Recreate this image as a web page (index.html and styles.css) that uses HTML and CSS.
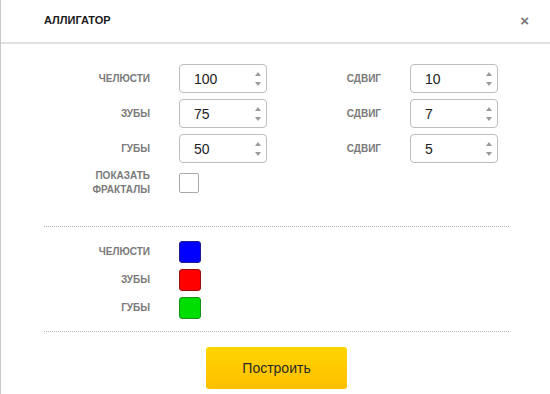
FILE: index.html
```html
<!DOCTYPE html>
<html lang="ru">

<head>
    <meta charset="UTF-8">
    <meta name="viewport" content="width=device-width, initial-scale=1.0">
    <title>Аллигатор</title>

    <link rel="stylesheet" href="styles.css">

</head>

<body>

    <div class="modal">
        <div class="modal_head">
            <span class="modal_title">АЛЛИГАТОР</span>
            <span class="close_butt">&times;</span>
        </div>

        <div class="modal_body">
            <!-- periods and shifts -->
            <div class="params">
                <label class="lbl">ЧЕЛЮСТИ</label>
                <div class="spin"><input type="text" value="100"><span class="arrows"><i class="up"></i><i class="down"></i></span></div>
                <label class="lbl">СДВИГ</label>
                <div class="spin"><input type="text" value="10"><span class="arrows"><i class="up"></i><i class="down"></i></span></div>

                <label class="lbl">ЗУБЫ</label>
                <div class="spin"><input type="text" value="75"><span class="arrows"><i class="up"></i><i class="down"></i></span></div>
                <label class="lbl">СДВИГ</label>
                <div class="spin"><input type="text" value="7"><span class="arrows"><i class="up"></i><i class="down"></i></span></div>

                <label class="lbl">ГУБЫ</label>
                <div class="spin"><input type="text" value="50"><span class="arrows"><i class="up"></i><i class="down"></i></span></div>
                <label class="lbl">СДВИГ</label>
                <div class="spin"><input type="text" value="5"><span class="arrows"><i class="up"></i><i class="down"></i></span></div>

                <label class="lbl">ПОКАЗАТЬ<br>ФРАКТАЛЫ</label>
                <span class="check"></span>
            </div>

            <!-- colors -->
            <div class="colors">
                <label class="lbl">ЧЕЛЮСТИ</label>
                <span class="swatch blue"></span>
                <label class="lbl">ЗУБЫ</label>
                <span class="swatch red"></span>
                <label class="lbl">ГУБЫ</label>
                <span class="swatch green"></span>
            </div>

            <div class="footer">
                <button class="build_butt">Построить</button>
            </div>
        </div>
    </div>

</body>

</html>
```

FILE: styles.css
```css
* {
    font-family: 'Liberation Sans', Arial, sans-serif;
    box-sizing: border-box;
}

body {
    margin: 0;
    background-color: white;
}

.modal {
    width: 550px;
    height: 394px;
    border-left: 1px solid #c8c8c8;
    background-color: white;
}

.modal_head {
    height: 44px;
    display: flex;
    align-items: center;
    justify-content: space-between;
    padding: 0 21px 2px 43px;
    border-bottom: 2px solid #e2e2e2;
}

.modal_title {
    font-size: 11px;
    font-weight: bold;
    color: #1a1a1a;
}

.close_butt {
    font-size: 15px;
    font-weight: bold;
    color: #777;
    cursor: pointer;
}

.modal_body {
    padding: 0 41px 0 43px;
}

.params {
    display: grid;
    grid-template-columns: 106px 88px 85px 88px;
    column-gap: 29px;
    row-gap: 6px;
    align-items: center;
    padding: 20px 0 29px;
    border-bottom: 1px dotted #b5b5b5;
}

.lbl {
    font-size: 10px;
    font-weight: bold;
    color: #7a7a7a;
    text-align: right;
    line-height: 14px;
}

.spin {
    height: 29px;
    display: flex;
    align-items: center;
    border: 1px solid #bdbdbd;
    border-radius: 4px;
    background-color: white;
}

.spin input {
    flex: 1;
    min-width: 0;
    border: none;
    outline: none;
    padding: 0 0 0 14px;
    font-size: 14px;
    color: #222;
    background: transparent;
}

.arrows {
    width: 16px;
    height: 100%;
    display: flex;
    flex-direction: column;
    justify-content: space-between;
    align-items: center;
    padding: 7px 0 6px;
}

.arrows i {
    width: 0;
    height: 0;
    border-left: 3px solid transparent;
    border-right: 3px solid transparent;
}

.arrows .up {
    border-bottom: 4px solid #9a9a9a;
}

.arrows .down {
    border-top: 4px solid #9a9a9a;
}

.check {
    width: 20px;
    height: 20px;
    border: 1px solid #aaa;
    border-radius: 2px;
}

.colors {
    display: grid;
    grid-template-columns: 106px 22px;
    column-gap: 29px;
    row-gap: 6px;
    align-items: center;
    padding: 14px 0 12px;
    border-bottom: 1px dotted #b5b5b5;
}

.swatch {
    width: 22px;
    height: 22px;
    border-radius: 3px;
}

.blue {
    background-color: #0000ff;
    border: 1px solid #1c1c8c;
}

.red {
    background-color: #ff0000;
    border: 1px solid #9a1010;
}

.green {
    background-color: #00dd00;
    border: 1px solid #189018;
}

.footer {
    display: flex;
    justify-content: center;
    padding-top: 15px;
}

.build_butt {
    width: 141px;
    height: 42px;
    border: none;
    border-radius: 3px;
    background: linear-gradient(#ffd500, #ffbf00);
    font-size: 14px;
    color: #2a2a2a;
    cursor: pointer;
}
```
